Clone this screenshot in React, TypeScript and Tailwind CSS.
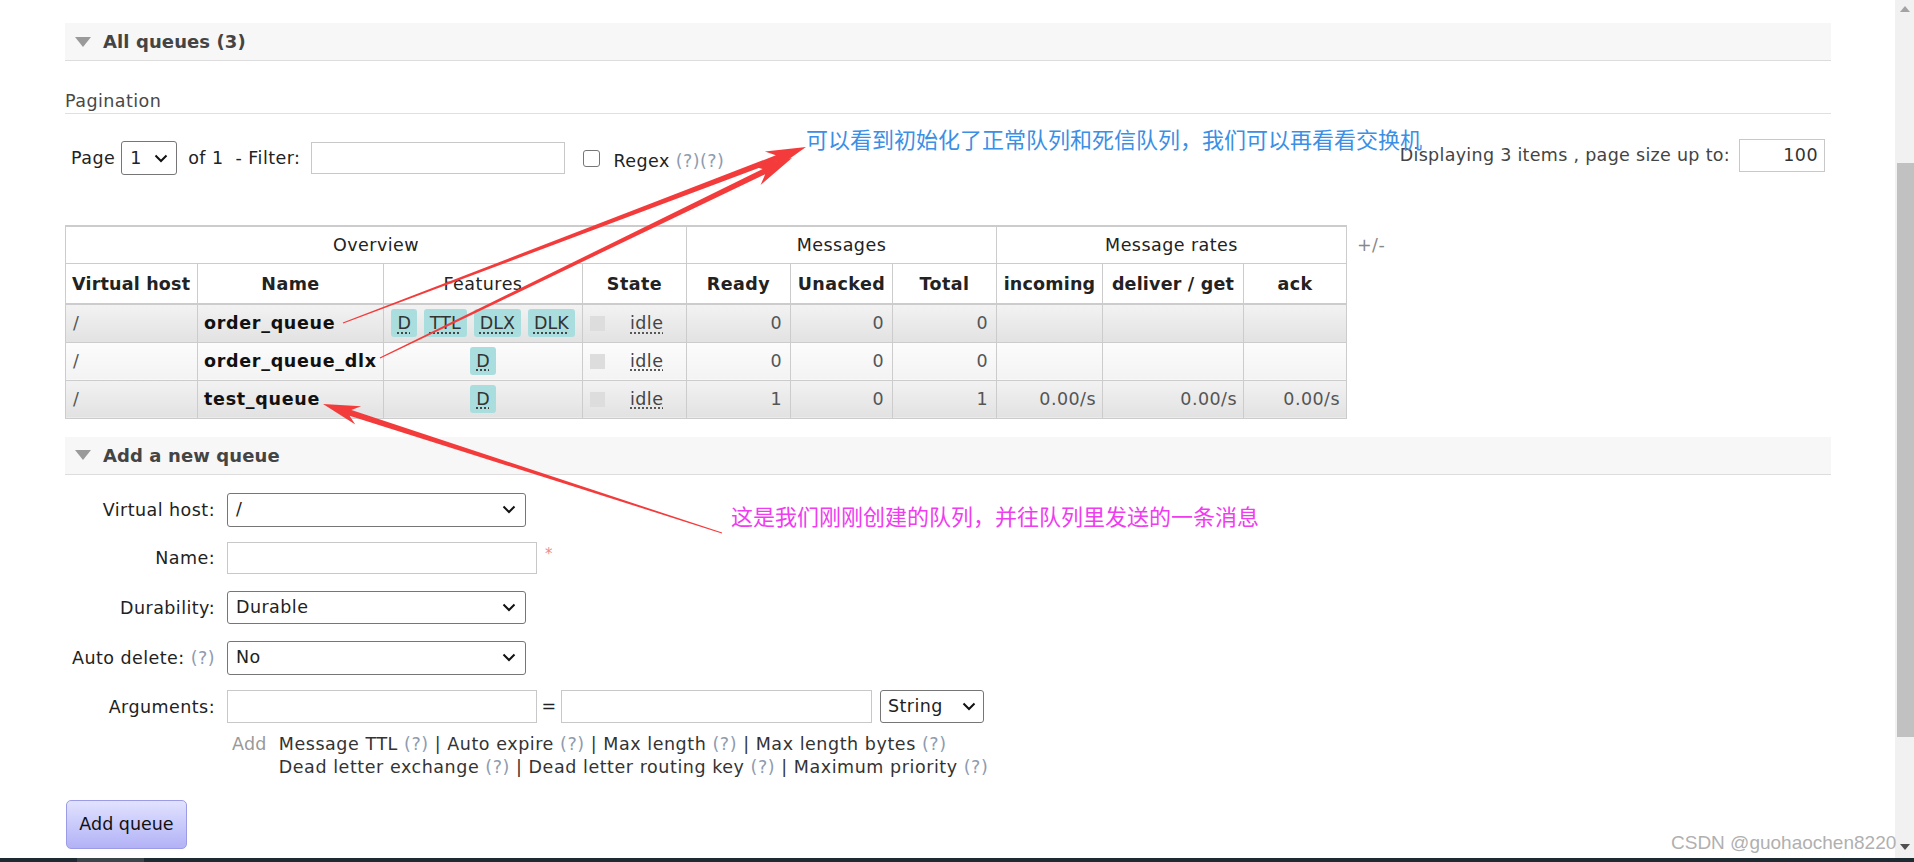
import React from "react";

const Q = () => <span className="text-[#8e9cb0]">(?)</span>;

function Chevron() {
  return (
    <svg width="14" height="9" viewBox="0 0 14 9" className="shrink-0">
      <path d="M1.5 1.5 L7 7 L12.5 1.5" fill="none" stroke="#111" strokeWidth="2" />
    </svg>
  );
}

type Pt = [number, number];
function arrowPoly(t: Pt, p: Pt, L: number, W: number, w0: number, w1: number) {
  const dx = p[0] - t[0];
  const dy = p[1] - t[1];
  const len = Math.hypot(dx, dy);
  const ux = dx / len;
  const uy = dy / len;
  const nx = -uy;
  const ny = ux;
  const bx = p[0] - ux * L;
  const by = p[1] - uy * L;
  const cx = p[0] - ux * L * 0.78;
  const cy = p[1] - uy * L * 0.78;
  const pts: Pt[] = [
    [t[0] + (nx * w0) / 2, t[1] + (ny * w0) / 2],
    [cx + (nx * w1) / 2, cy + (ny * w1) / 2],
    [bx + (nx * W) / 2, by + (ny * W) / 2],
    [p[0], p[1]],
    [bx - (nx * W) / 2, by - (ny * W) / 2],
    [cx - (nx * w1) / 2, cy - (ny * w1) / 2],
    [t[0] - (nx * w0) / 2, t[1] - (ny * w0) / 2],
  ];
  return pts.map((q) => q[0].toFixed(1) + "," + q[1].toFixed(1)).join(" ");
}

const rows = [
  { name: "order_queue", tags: ["D", "TTL", "DLX", "DLK"], ready: "0", unacked: "0", total: "0", rates: ["", "", ""], alt: 1 },
  { name: "order_queue_dlx", tags: ["D"], ready: "0", unacked: "0", total: "0", rates: ["", "", ""], alt: 2 },
  { name: "test_queue", tags: ["D"], ready: "1", unacked: "0", total: "1", rates: ["0.00/s", "0.00/s", "0.00/s"], alt: 1 },
];

function SectionHeader({ title }: { title: string }) {
  return (
    <div className="h-[38px] bg-[#f7f7f7] border-b border-[#dddddd] flex items-center">
      <svg width="16" height="10" viewBox="0 0 16 10" className="ml-[10px]">
        <path d="M0 0 L16 0 L8 10 Z" fill="#9a9a9a" />
      </svg>
      <span className="ml-[12px] text-[18px] font-bold text-[#444] tracking-[0.1px]">{title}</span>
    </div>
  );
}

export default function App() {
  const cellBg = (alt: number) =>
    alt === 1 ? "bg-linear-to-b from-[#f2f2f2] to-[#e2e2e2]" : "bg-linear-to-b from-[#fcfcfc] to-[#f3f3f3]";

  return (
    <div className="relative w-[1914px] h-[862px] overflow-hidden bg-white flex flex-col font-['DejaVu_Sans','Noto_Sans_CJK_SC',sans-serif] text-[17.5px] tracking-[0.45px] text-[#222]">
      <div className="flex h-[858px]">
        {/* main content */}
        <div className="flex-1 pl-[65px] pt-[23px]">
          <div className="w-[1766px]">
            <SectionHeader title="All queues (3)" />

            <div className="mt-[27px] h-[26px] leading-[26px] border-b border-[#e0e0e0] text-[#484848]">Pagination</div>

            <div className="mt-[27px] h-[34px] flex items-center">
              <span className="ml-[6px]">Page</span>
              <div className="ml-[6px] w-[56px] h-[34px] border border-[#767676] rounded-[3px] flex items-center justify-between pl-[8px] pr-[8px]">
                <span>1</span>
                <Chevron />
              </div>
              <span className="ml-[11px]">of 1</span>
              <span className="ml-[12px]">- Filter:</span>
              <div className="ml-[11px] w-[254px] h-[32px] border border-[#c8c8c8]" />
              <div className="ml-[18px] w-[17px] h-[17px] border-[1.5px] border-[#767676] rounded-[3px]" />
              <span className="ml-[13px] mt-[6px]">
                Regex <Q />
                <Q />
              </span>
              <div className="flex-1" />
              <div className="flex items-center -mt-[6px] mr-[6px]">
                <span className="text-[#444] tracking-[0.3px]">Displaying 3 items , page size up to:</span>
                <div className="ml-[9px] w-[86px] h-[33px] border border-[#c8c8c8] flex items-center justify-end pr-[6px] text-[#333]">100</div>
              </div>
            </div>

            <div className="mt-[50px] flex items-start">
              <table className="table-fixed border-collapse w-[1281px] border-t-2 border-[#cccccc]">
                <colgroup>
                  <col className="w-[132px]" />
                  <col className="w-[186px]" />
                  <col className="w-[199px]" />
                  <col className="w-[104px]" />
                  <col className="w-[104px]" />
                  <col className="w-[102px]" />
                  <col className="w-[104px]" />
                  <col className="w-[106px]" />
                  <col className="w-[141px]" />
                  <col className="w-[103px]" />
                </colgroup>
                <thead>
                  <tr className="h-[37px]">
                    <th colSpan={4} className="border border-[#cccccc] font-normal text-center">Overview</th>
                    <th colSpan={3} className="border border-[#cccccc] font-normal text-center">Messages</th>
                    <th colSpan={3} className="border border-[#cccccc] font-normal text-center">Message rates</th>
                  </tr>
                  <tr className="h-[41px]">
                    <th className="border border-b-2 border-[#cccccc] font-bold text-left pl-[6px] pt-[2px] tracking-[0.2px] whitespace-nowrap">Virtual host</th>
                    <th className="border border-b-2 border-[#cccccc] font-bold text-center pt-[2px]">Name</th>
                    <th className="border border-b-2 border-[#cccccc] font-normal text-center pt-[2px]">Features</th>
                    <th className="border border-b-2 border-[#cccccc] font-bold text-center pt-[2px]">State</th>
                    <th className="border border-b-2 border-[#cccccc] font-bold text-center pt-[2px]">Ready</th>
                    <th className="border border-b-2 border-[#cccccc] font-bold text-center pt-[2px]">Unacked</th>
                    <th className="border border-b-2 border-[#cccccc] font-bold text-center pt-[2px]">Total</th>
                    <th className="border border-b-2 border-[#cccccc] font-bold text-center pt-[2px] whitespace-nowrap tracking-[0.2px]">incoming</th>
                    <th className="border border-b-2 border-[#cccccc] font-bold text-center pt-[2px] whitespace-nowrap tracking-[0.2px]">deliver / get</th>
                    <th className="border border-b-2 border-[#cccccc] font-bold text-center pt-[2px]">ack</th>
                  </tr>
                </thead>
                <tbody>
                  {rows.map((r) => (
                    <tr key={r.name} className="h-[38px]">
                      <td className={"border border-[#cccccc] pl-[7px] text-[#555] " + cellBg(r.alt)}>/</td>
                      <td className={"border border-[#cccccc] pl-[6px] font-bold text-[#111] tracking-[0.7px] whitespace-nowrap " + cellBg(r.alt)}>{r.name}</td>
                      <td className={"border border-[#cccccc] " + cellBg(r.alt)}>
                        <div className="flex justify-center gap-[7px] tracking-normal">
                          {r.tags.map((t) => (
                            <span key={t} className="bg-[#aadddd] rounded-[3px] h-[28px] px-[6px] flex items-center text-[#333] underline decoration-dotted underline-offset-[3px]">
                              {t}
                            </span>
                          ))}
                        </div>
                      </td>
                      <td className={"border border-[#cccccc] " + cellBg(r.alt)}>
                        <div className="flex items-center pl-[7px]">
                          <span className="w-[15px] h-[15px] bg-[#dddddd]" />
                          <span className="ml-[25px] text-[#444] underline decoration-dotted underline-offset-[3px]">idle</span>
                        </div>
                      </td>
                      <td className={"border border-[#cccccc] text-right pr-[8px] text-[#555] " + cellBg(r.alt)}>{r.ready}</td>
                      <td className={"border border-[#cccccc] text-right pr-[8px] text-[#555] " + cellBg(r.alt)}>{r.unacked}</td>
                      <td className={"border border-[#cccccc] text-right pr-[8px] text-[#555] " + cellBg(r.alt)}>{r.total}</td>
                      {r.rates.map((v, i) => (
                        <td key={i} className={"border border-[#cccccc] text-right pr-[6px] text-[#555] " + cellBg(r.alt)}>{v}</td>
                      ))}
                    </tr>
                  ))}
                </tbody>
              </table>
              <span className="ml-[10px] mt-[7px] text-[#888]">+/-</span>
            </div>

            <div className="mt-[18px]">
              <SectionHeader title="Add a new queue" />
            </div>

            <div className="mt-[18px] flex flex-col">
              <div className="flex items-center h-[34px]">
                <span className="w-[150px] text-right pt-[2px]">Virtual host:</span>
                <div className="ml-[12px] w-[299px] h-[34px] border border-[#767676] rounded-[3px] flex items-center justify-between pl-[8px] pr-[9px]">
                  <span>/</span>
                  <Chevron />
                </div>
              </div>
              <div className="mt-[15px] flex items-center h-[32px]">
                <span className="w-[150px] text-right pt-[2px]">Name:</span>
                <div className="ml-[12px] w-[310px] h-[32px] border border-[#c8c8c8]" />
                <span className="ml-[8px] -mt-[6px] text-[#f08a8a] text-[15px]">*</span>
              </div>
              <div className="mt-[17px] flex items-center h-[33px]">
                <span className="w-[150px] text-right pt-[2px]">Durability:</span>
                <div className="ml-[12px] w-[299px] h-[33px] border border-[#767676] rounded-[3px] flex items-center justify-between pl-[8px] pr-[9px]">
                  <span>Durable</span>
                  <Chevron />
                </div>
              </div>
              <div className="mt-[17px] flex items-center h-[34px]">
                <span className="w-[150px] text-right whitespace-nowrap pt-[2px]">
                  Auto delete: <Q />
                </span>
                <div className="ml-[12px] w-[299px] h-[34px] border border-[#767676] rounded-[3px] flex items-center justify-between pl-[8px] pr-[9px]">
                  <span>No</span>
                  <Chevron />
                </div>
              </div>
              <div className="mt-[15px] flex items-center h-[33px]">
                <span className="w-[150px] text-right pt-[2px]">Arguments:</span>
                <div className="ml-[12px] w-[310px] h-[33px] border border-[#c8c8c8]" />
                <span className="w-[24px] text-center">=</span>
                <div className="w-[311px] h-[33px] border border-[#c8c8c8]" />
                <div className="ml-[8px] w-[104px] h-[33px] border border-[#767676] rounded-[3px] flex items-center justify-between pl-[7px] pr-[7px]">
                  <span>String</span>
                  <Chevron />
                </div>
              </div>
              <div className="mt-[10px] flex text-[17.5px] tracking-[0.55px] leading-[23px]">
                <span className="ml-[167px] text-[#999] tracking-[0.3px]">Add</span>
                <div className="ml-[12px] flex flex-col text-[#333]">
                  <span>
                    Message TTL <Q /> | Auto expire <Q /> | Max length <Q /> | Max length bytes <Q />
                  </span>
                  <span>
                    Dead letter exchange <Q /> | Dead letter routing key <Q /> | Maximum priority <Q />
                  </span>
                </div>
              </div>
              <div className="mt-[21px]">
                <button className="ml-[1px] w-[121px] h-[49px] rounded-[5px] border border-[#9c9ce6] bg-linear-to-b from-[#e2e2ff] to-[#b2b2f6] text-[#111] text-[17.5px] tracking-normal">
                  Add queue
                </button>
              </div>
            </div>
          </div>
        </div>

        {/* scrollbar */}
        <div className="w-[19px] h-[858px] bg-[#f1f1f1] flex flex-col">
          <div className="h-[17px] flex items-center justify-center">
            <svg width="10" height="6" viewBox="0 0 10 6"><path d="M0 6 L5 0 L10 6 Z" fill="#a3a3a3" /></svg>
          </div>
          <div className="mt-[146px] ml-[2px] h-[574px] bg-[#c1c1c1]" />
          <div className="flex-1" />
          <div className="h-[17px] mb-[3px] flex items-center justify-center">
            <svg width="10" height="6" viewBox="0 0 10 6"><path d="M0 0 L10 0 L5 6 Z" fill="#505050" /></svg>
          </div>
        </div>
      </div>
      <div className="h-[4px] bg-[#1d2a31] flex">
        <div className="ml-[77px] w-[67px] bg-[#3a454c]" />
      </div>

      {/* annotations */}
      <svg className="absolute left-0 top-0 pointer-events-none" width="1914" height="862">
        <polygon points={arrowPoly([343, 323], [806, 147], 40, 21, 1.2, 6)} fill="#f43b3b" />
        <polygon points={arrowPoly([380, 358], [792, 158], 40, 21, 1.2, 6)} fill="#f43b3b" />
        <polygon points={arrowPoly([722, 533], [323, 404], 37, 19, 0.8, 6)} fill="#f43b3b" />
      </svg>
      <div className="absolute left-[806px] top-[124px] text-[22px] leading-[28px] tracking-normal text-[#3b8fe4] whitespace-nowrap font-['Noto_Sans_CJK_SC',sans-serif]">
        可以看到初始化了正常队列和死信队列，我们可以再看看交换机
      </div>
      <div className="absolute left-[731px] top-[501px] text-[22px] leading-[28px] tracking-normal text-[#f03cf0] whitespace-nowrap font-['Noto_Sans_CJK_SC',sans-serif]">
        这是我们刚刚创建的队列，并往队列里发送的一条消息
      </div>
      <div className="absolute left-[1671px] top-[831px] text-[19px] leading-[24px] tracking-normal text-[#b0b0b0] whitespace-nowrap font-['Liberation_Sans',sans-serif]">
        CSDN @guohaochen8220
      </div>
    </div>
  );
}
